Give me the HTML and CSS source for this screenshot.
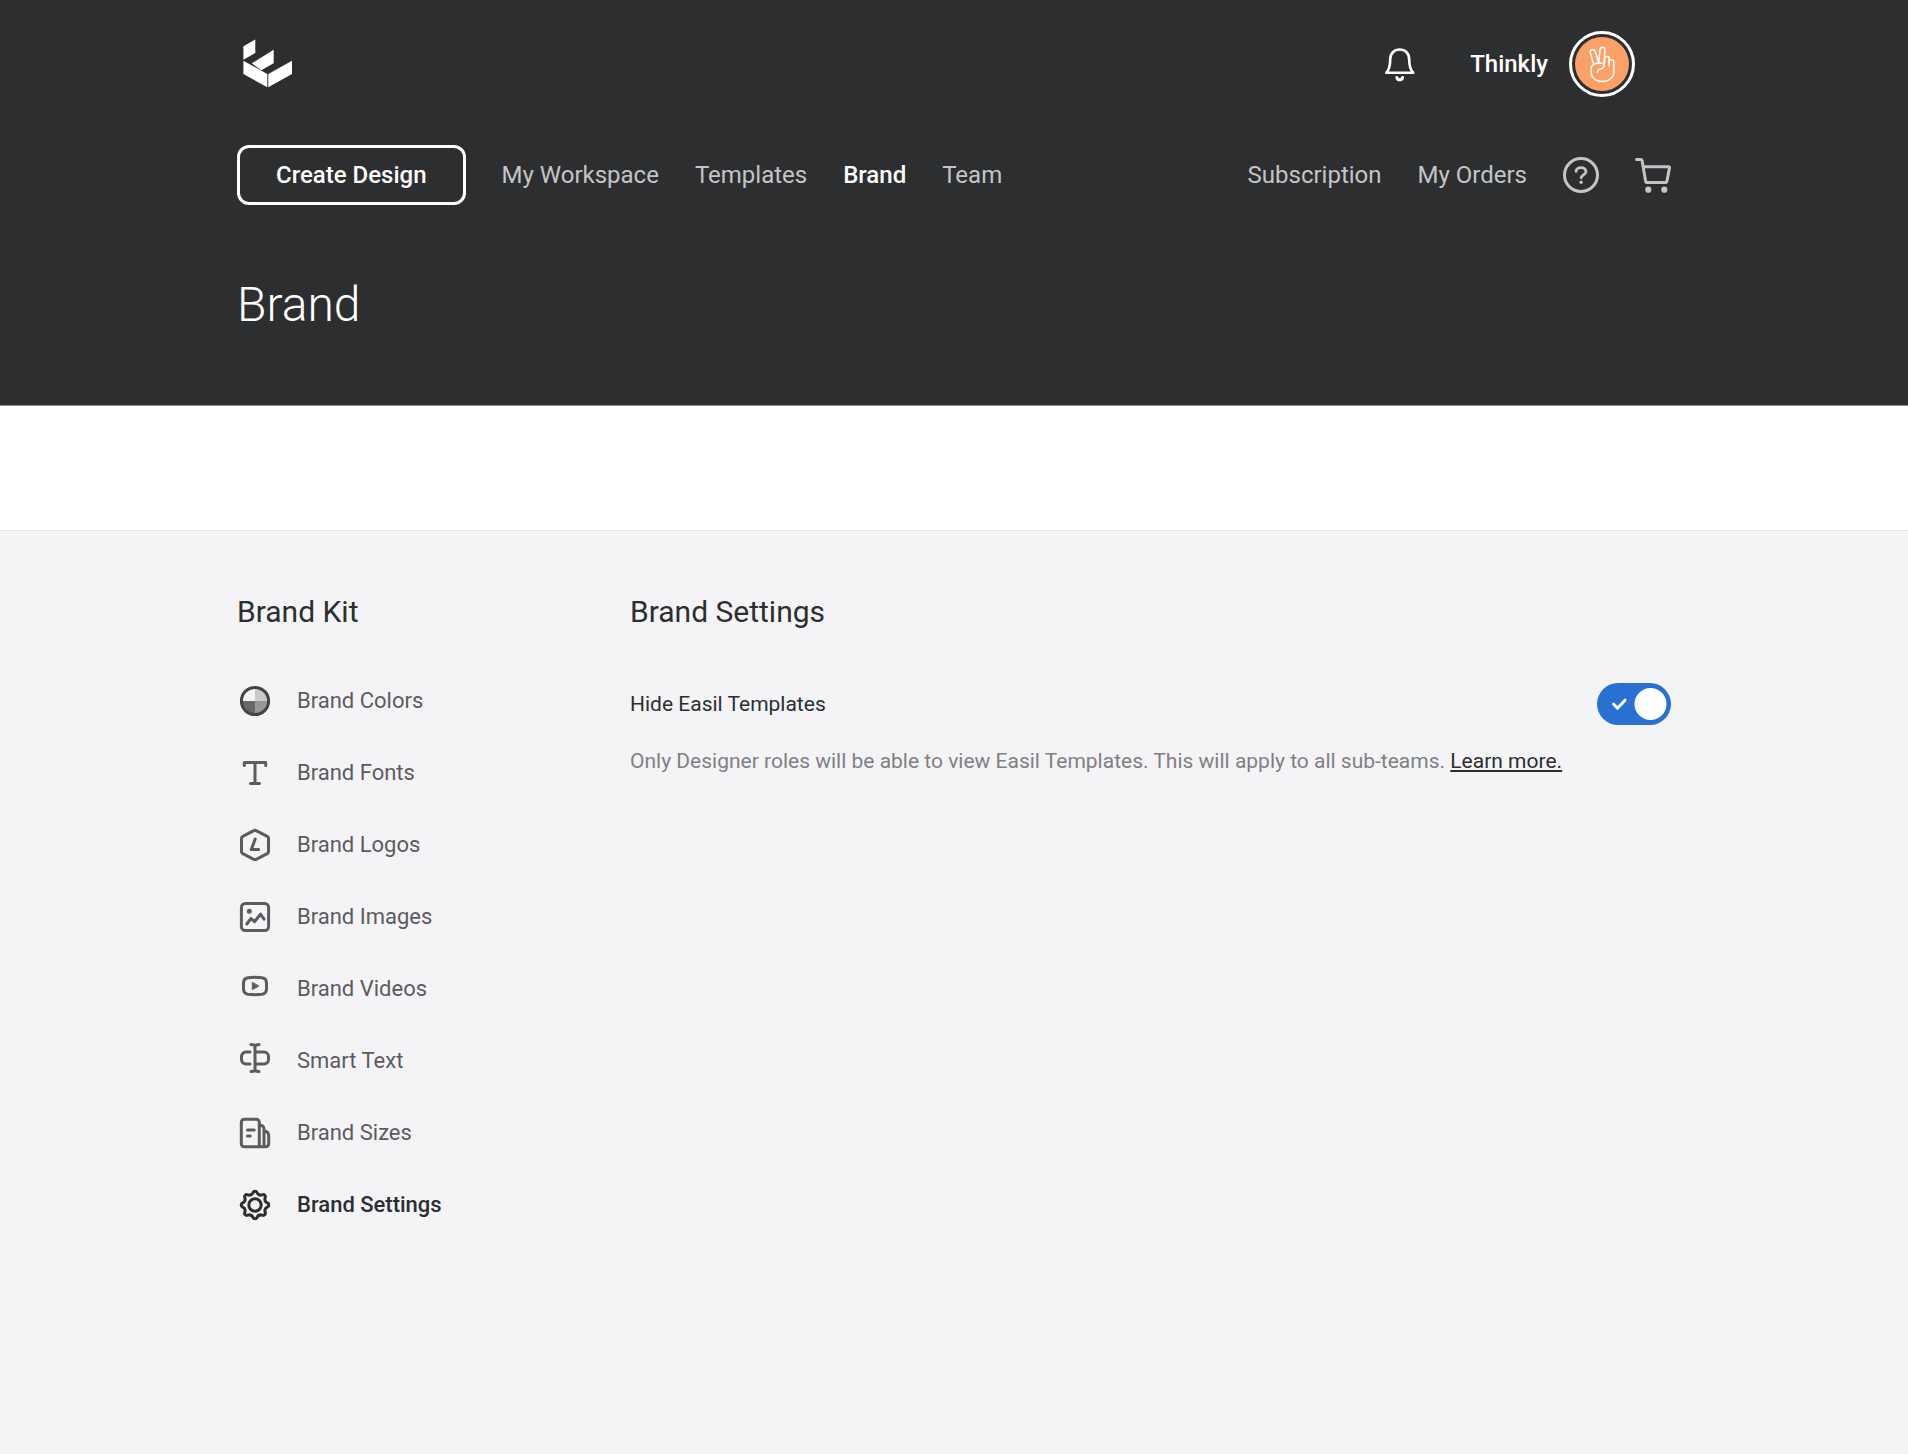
FILE: index.html
```html
<!DOCTYPE html>
<html lang="en">
<head>
<meta charset="utf-8">
<meta name="viewport" content="width=device-width, initial-scale=1">
<title>Brand Settings</title>
<link rel="stylesheet" href="styles.css">
</head>
<body>
<header class="header">
  <div class="container">
    <div class="topbar">
      <a class="logo" href="#" aria-label="Home">
        <svg width="50" height="50" viewBox="-1 -1 50 50" fill="currentColor" aria-hidden="true">
          <path d="M-.6 6.3 11.3-.6V13L-.6 19.7zM7.7 23.3 29.7 9.7v13.6l-12.4 7zM-.6 20.7 23.3 34v13.3L-.6 34zM24.3 34 48 20.7V34L24.3 47.3z"/>
        </svg>
      </a>
      <div class="account">
        <button class="icon-button" type="button" aria-label="Notifications">
          <svg class="icon" viewBox="0 0 36 36" aria-hidden="true">
            <path d="M4.3 26.7C7.5 23.4 8.2 20 8.2 13.5 8.2 7.5 12 3.5 17.7 3.5s9.5 4 9.5 10c0 6.500.8 9.900 4 13.200z" stroke-width="2.600"/>
            <path d="M14.800 31.500c.8 3 5 3 5.800 0" stroke-width="3"/>
          </svg>
        </button>
        <button class="profile" type="button">
          <span>Thinkly</span>
          <svg class="avatar" viewBox="0 0 66 66" aria-hidden="true">
            <circle cx="33" cy="33" r="31.500" fill="none" stroke="#fff" stroke-width="3"/>
            <circle cx="33" cy="33" r="27" fill="#fba067"/>
            <g class="avatar-hand">
              <path d="M24.500 33 21.300 22c-.9-3.200 3.600-5 4.900-1.600L29.700 31.500 31 18.700c.3-3.600 5-3.200 4.900.2L35 34"/>
              <path d="M35.600 32v-4.300c0-2.900 4.500-2.900 4.500 0V35"/>
              <path d="M40.100 31c0-3 4.700-3 4.700 0v9.500c0 6-4.800 10-11.500 10-7 0-11.300-4-11.300-10.500 0-4 .6-6.300 2.800-7 2.700-.9 6.800-1.300 8.600-.6 2.600 1 2.100 4.600-.6 5.200-2.300.5-4.300.6-4.300 3.900"/>
            </g>
          </svg>
        </button>
      </div>
    </div>
    <nav class="nav" aria-label="Main">
      <button class="create-button" type="button">Create Design</button>
      <a href="#">My Workspace</a>
      <a href="#">Templates</a>
      <a class="is-active" href="#" aria-current="page">Brand</a>
      <a href="#">Team</a>
      <a class="nav-end" href="#">Subscription</a>
      <a href="#">My Orders</a>
      <a class="icon-button" href="#" aria-label="Help">
        <svg class="icon" viewBox="0 0 36 36" aria-hidden="true">
          <circle cx="18" cy="18" r="16.500"/>
          <path d="M13 14.300c.4-5.100 10-4.900 10 .2 0 3.400-4.800 3.300-4.800 6.300" stroke-width="2.800"/>
          <circle cx="18.100" cy="25.200" r="1.700" fill="currentColor" stroke="none"/>
        </svg>
      </a>
      <a class="icon-button" href="#" aria-label="Cart">
        <svg class="icon" viewBox="0 0 36 36" aria-hidden="true">
          <path d="M1.500 2.500h4.300c.8 0 1.200.4 1.300 1.100l3.500 20.600c.1.800.5 1.300 1.400 1.300h18.500c.8 0 1.300-.4 1.400-1.200L34.500 10.700c.1-.7-.2-1-.9-1H8.300"/>
          <circle cx="13.300" cy="32.700" r="3.100" fill="currentColor" stroke="none"/>
          <circle cx="29.300" cy="32.700" r="3.100" fill="currentColor" stroke="none"/>
        </svg>
      </a>
    </nav>
    <h1 class="page-title">Brand</h1>
  </div>
</header>

<div class="subheader"></div>

<main class="content container">
  <aside>
    <h2 class="section-title">Brand Kit</h2>
    <ul class="kit-list">
      <li><a href="#">
        <svg class="icon" viewBox="0 0 36 36" aria-hidden="true">
          <path d="M18 5v13h13A13 13 0 0 0 18 5z" fill="#c9c9cb" stroke="none"/>
          <path d="M18 31V18h13a13 13 0 0 1-13 13z" fill="#98989a" stroke="none"/>
          <path d="M18 31V18H5a13 13 0 0 0 13 13z" fill="#69696b" stroke="none"/>
          <circle cx="18" cy="18" r="13.600" stroke="#444447"/>
        </svg>Brand Colors</a></li>
      <li><a href="#">
        <svg class="icon" viewBox="0 0 36 36" aria-hidden="true">
          <path d="M7.300 10.500v-3h21.400v3M18 7.500v21M13.500 28.600h9"/>
        </svg>Brand Fonts</a></li>
      <li><a href="#">
        <svg class="icon" viewBox="0 0 36 36" aria-hidden="true">
          <path d="M16.800 3.700a2.500 2.500 0 0 1 2.400 0l11 5.700a2.300 2.300 0 0 1 1.300 2v13.200a2.300 2.300 0 0 1-1.300 2l-11 5.700a2.500 2.500 0 0 1-2.400 0l-11-5.700a2.300 2.300 0 0 1-1.300-2V11.400a2.300 2.300 0 0 1 1.300-2zM18.200 12 14.300 22.500h7.300"/>
        </svg>Brand Logos</a></li>
      <li><a href="#">
        <svg class="icon" viewBox="0 0 36 36" aria-hidden="true">
          <rect x="4.400" y="4.400" width="27.200" height="27.200" rx="4"/>
          <circle cx="12.300" cy="12.200" r="2.500" fill="currentColor" stroke="none"/>
          <path d="m9.800 25 4.200-5.500 3.500 3.200 6-7.500 3.500 5"/>
        </svg>Brand Images</a></li>
      <li><a href="#">
        <svg class="icon" viewBox="0 0 36 36" aria-hidden="true">
          <path d="M10.800 6.800q7.200-.9 14.400 0c2.700.4 4 1.700 4.200 4.200q.3 4 0 8c-.2 2.500-1.500 3.800-4.200 4.200q-7.200.9-14.400 0c-2.700-.4-4-1.700-4.200-4.200q-.3-4 0-8c.2-2.500 1.500-3.800 4.200-4.200z"/>
          <path d="M15.300 11.700v7l6.200-3.500z" fill="currentColor" stroke-width="1"/>
        </svg>Brand Videos</a></li>
      <li><a href="#">
        <svg class="icon" viewBox="0 0 36 36" aria-hidden="true">
          <path d="M14 1.500c2.500 0 4 .8 4 2.300 0-1.500 1.500-2.300 4-2.300M18 3.500v23M14 28.500c2.500 0 4-.8 4-2.300 0 1.500 1.500 2.300 4 2.300M13 9H9a4.500 4.500 0 0 0-4.500 4.500v3A4.500 4.500 0 0 0 9 21h4M18 9h9a4.500 4.500 0 0 1 4.500 4.500v3A4.500 4.500 0 0 1 27 21h-9"/>
        </svg>Smart Text</a></li>
      <li><a href="#">
        <svg class="icon" viewBox="0 0 36 36" aria-hidden="true">
          <path d="M7.300 4.300h12a3 3 0 0 1 3 3v24.400h-15a3 3 0 0 1-3-3V7.300a3 3 0 0 1 3-3zM10.500 15h6.700M10.500 21h2.700M22.300 10c3 0 4.700 1.500 4.700 4.500v17.200M27 16c3.200.2 4.700 1.800 4.700 4.800v8a2.900 2.900 0 0 1-2.900 2.900h-6.500"/>
        </svg>Brand Sizes</a></li>
      <li><a class="is-active" href="#" aria-current="page">
        <svg class="icon" viewBox="-18 -18 36 36" aria-hidden="true">
          <path d="M-1.970-12.440A2.100 2.100 0 0 1 1.970-12.440 4.500 4.500 0 0 0 7.410-10.190 2.100 2.100 0 0 1 10.190-7.410 4.500 4.500 0 0 0 12.440-1.970 2.100 2.100 0 0 1 12.440 1.970 4.500 4.500 0 0 0 10.190 7.410 2.100 2.100 0 0 1 7.410 10.190 4.500 4.500 0 0 0 1.970 12.440 2.100 2.100 0 0 1-1.970 12.440 4.500 4.500 0 0 0-7.410 10.190 2.100 2.100 0 0 1-10.190 7.410 4.500 4.500 0 0 0-12.440 1.970 2.100 2.100 0 0 1-12.440-1.970 4.500 4.500 0 0 0-10.190-7.410 2.100 2.100 0 0 1-7.410-10.190 4.500 4.500 0 0 0-1.970-12.440z"/>
          <circle r="6.200"/>
        </svg>Brand Settings</a></li>
    </ul>
  </aside>
  <section>
    <h2 class="section-title">Brand Settings</h2>
    <div class="setting">
      <label for="hide-templates">Hide Easil Templates</label>
      <span class="toggle">
        <input id="hide-templates" type="checkbox" role="switch" aria-describedby="hide-help" checked>
        <svg viewBox="0 0 74 42" aria-hidden="true">
          <circle cx="53.500" cy="21" r="16" fill="#fff"/>
          <path d="m16.500 21 4 4.200 7.500-8" fill="none" stroke="#fff" stroke-width="3" stroke-linecap="round" stroke-linejoin="round"/>
        </svg>
      </span>
    </div>
    <p class="setting-help" id="hide-help">Only Designer roles will be able to view Easil Templates. This will apply to all sub-teams. <a href="#">Learn more.</a></p>
  </section>
</main>
</body>
</html>
```

FILE: styles.css
```css
* {
  box-sizing: border-box;
}

body {
  margin: 0;
  background: #f4f4f6;
  color: #2d2e30;
  font-family: Roboto, "Liberation Sans", sans-serif;
  font-size: 22px;
  line-height: 30px;
}

a {
  color: inherit;
  text-decoration: none;
}

button {
  padding: 0;
  border: 0;
  background: none;
  color: inherit;
  font: inherit;
  cursor: pointer;
}

.container {
  width: min(100% - 48px, 1434px);
  margin: 0 auto;
}

.icon {
  display: block;
  flex: none;
  width: 36px;
  height: 36px;
  fill: none;
  stroke: currentColor;
  stroke-width: 3;
  stroke-linecap: round;
  stroke-linejoin: round;
}

/* Header */

.header {
  padding: 31px 0 70px;
  border-bottom: 1px solid #8b8b8d;
  background: #2d2e30;
  color: #fff;
}

.topbar,
.account,
.profile,
.nav {
  display: flex;
  align-items: center;
}

.topbar {
  justify-content: space-between;
  padding: 0 36px 0 6px;
}

.logo svg,
.avatar {
  display: block;
}

.account {
  gap: 52px;
}

.profile {
  gap: 21px;
  font-size: 24px;
  font-weight: 500;
}

.avatar {
  width: 66px;
  height: 66px;
}

.avatar-hand {
  fill: none;
  stroke: #fff;
  stroke-width: 1.5;
  stroke-linecap: round;
  stroke-linejoin: round;
}

.nav {
  flex-wrap: wrap;
  gap: 36px;
  margin-top: 48px;
  color: #c4c4c6;
  font-size: 24px;
}

.nav .is-active {
  color: #fff;
  font-weight: 500;
}

.nav-end {
  margin-left: auto;
}

.create-button {
  height: 60px;
  padding: 0 36px;
  border: 3px solid #fff;
  border-radius: 12px;
  color: #fff;
  font-weight: 500;
}

.page-title {
  margin: 70px 0 0;
  font-size: 48px;
  font-weight: 300;
  line-height: 60px;
}

.subheader {
  height: 125px;
  border-bottom: 1px solid #e6e6e8;
  background: #fff;
}

/* Content */

.content {
  display: grid;
  grid-template-columns: 393px 1fr;
  padding: 63px 0;
}

.section-title {
  margin: 0;
  font-size: 30px;
  font-weight: 400;
  line-height: 36px;
}

.kit-list {
  margin: 35px 0 0;
  padding: 0;
  list-style: none;
}

.kit-list a {
  display: flex;
  align-items: center;
  gap: 24px;
  height: 72px;
  color: #5c5c5f;
}

.kit-list .is-active {
  color: #2d2e30;
  font-weight: 500;
}

.setting {
  display: flex;
  align-items: center;
  justify-content: space-between;
  margin-top: 53px;
  font-size: 21px;
}

.toggle {
  display: grid;
  width: 74px;
  height: 42px;
}

.toggle > * {
  grid-area: 1 / 1;
  width: 74px;
  height: 42px;
  margin: 0;
}

.toggle input {
  appearance: none;
  border-radius: 21px;
  background: #2970d3;
  cursor: pointer;
}

.toggle svg {
  pointer-events: none;
}

.setting-help {
  margin: 21px 0 0;
  color: #808083;
  font-size: 21px;
}

.setting-help a {
  color: #2d2e30;
  text-decoration: underline;
}
```
